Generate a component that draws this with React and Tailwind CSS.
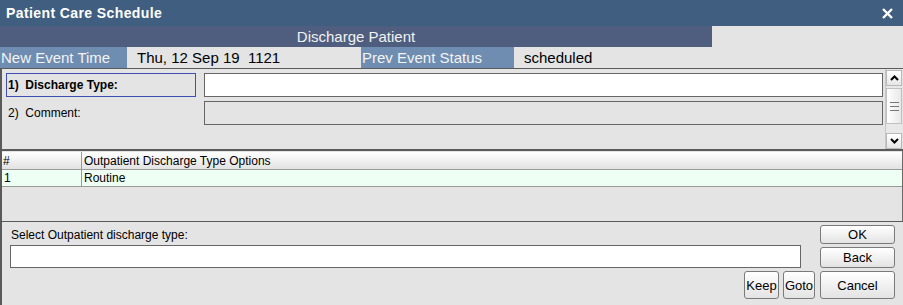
import React from 'react';

const Btn = ({ children, className }) => (
  <button
    className={`rounded-[3px] border border-[#7a7a7a] bg-gradient-to-b from-white to-[#e3e3e3] text-[13px] leading-none text-black ${className}`}
  >
    {children}
  </button>
);

const ScrollBar = () => (
  <div className="w-[17px] flex flex-col border-l border-[#c8c8c8] bg-[#e8e8e8]">
    <div className="h-[16px] mt-[1px] flex items-center justify-center border border-[#b8b8b8] bg-gradient-to-b from-white to-[#e6e6e6]">
      <svg width="9" height="6" viewBox="0 0 9 6">
        <path d="M1 5 L4.5 1.5 L8 5" stroke="#000" strokeWidth="2" fill="none" />
      </svg>
    </div>
    <div className="h-[36px] mt-[2px] flex items-center justify-center border border-[#c0c0c0] bg-gradient-to-r from-white to-[#e8e8e8]">
      <div className="flex flex-col gap-[3px]">
        <div className="w-[9px] h-px bg-[#777]" />
        <div className="w-[9px] h-px bg-[#777]" />
        <div className="w-[9px] h-px bg-[#777]" />
      </div>
    </div>
    <div className="flex-1" />
    <div className="h-[16px] flex items-center justify-center border border-[#b8b8b8] bg-gradient-to-b from-white to-[#e6e6e6]">
      <svg width="9" height="6" viewBox="0 0 9 6">
        <path d="M1 1 L4.5 4.5 L8 1" stroke="#000" strokeWidth="2" fill="none" />
      </svg>
    </div>
  </div>
);

export default function App() {
  return (
    <div
      className="w-[903px] h-[305px] bg-[#e4e4e4] flex flex-col overflow-hidden text-black"
      style={{ fontFamily: '"Liberation Sans", Arial, sans-serif' }}
    >
      {/* title bar */}
      <div className="h-[26px] bg-[#3f5e80] flex items-center justify-between pl-[6px] pr-[10px]">
        <span className="text-white font-bold text-[14px] tracking-[0.4px]">Patient Care Schedule</span>
        <svg width="11" height="11" viewBox="0 0 11 11">
          <path d="M1 1 L10 10 M10 1 L1 10" stroke="#fff" strokeWidth="2.4" />
        </svg>
      </div>

      {/* header */}
      <div className="h-[21px] flex">
        <div className="w-[712px] bg-[#4f5e7e] text-[#f2f2f2] text-[15px] leading-[21px] text-center">
          Discharge Patient
        </div>
      </div>

      {/* event info */}
      <div className="h-[21px] flex text-[15px] leading-[21px]">
        <div className="w-[127px] bg-[#6e8db1] text-[#f4f4f4] pl-[1px]">New Event Time</div>
        <div className="w-[234px] pl-[10px]">Thu, 12 Sep 19&nbsp;&nbsp;1121</div>
        <div className="w-[153px] bg-[#6e8db1] text-[#f4f4f4] pl-[1px]">Prev Event Status</div>
        <div className="pl-[10px]">scheduled</div>
      </div>

      {/* form */}
      <div className="h-[83px] flex border-t border-[#5a5a5a] border-l-2 border-b-2 border-l-[#5a5a5a] border-b-[#5a5a5a]">
        <div className="flex-1 flex flex-col gap-[4px] pt-[4px] pl-[4px] pr-[2px]">
          <div className="flex items-center gap-[8px]">
            <div className="w-[190px] h-[24px] border border-[#3d4fb4] flex items-center pl-[1px] text-[12px] font-bold">
              1)&nbsp;&nbsp;Discharge Type:
            </div>
            <div className="flex-1 h-[24px] bg-white border border-[#666]" />
          </div>
          <div className="flex items-center gap-[8px]">
            <div className="w-[190px] h-[24px] flex items-center pl-[2px] text-[12px]">
              2)&nbsp;&nbsp;Comment:
            </div>
            <div className="flex-1 h-[24px] border border-[#666]" />
          </div>
        </div>
        <ScrollBar />
        <div className="w-[1px]" />
      </div>

      {/* table */}
      <div className="h-[71px] flex flex-col border-l-2 border-[#5a5a5a] border-r border-r-[#6a6a6a] border-b border-b-[#5a5a5a] text-[12px]">
        <div className="h-[18px] mt-[1px] flex bg-gradient-to-b from-white to-[#e2e2e2] border-b border-[#9a9a9a]">
          <div className="w-[80px] pl-[1px] leading-[18px] border-r border-[#9a9a9a]">#</div>
          <div className="pl-[2px] leading-[18px]">Outpatient Discharge Type Options</div>
        </div>
        <div className="h-[17px] flex bg-[#eefff3] border-b border-[#9a9a9a]">
          <div className="w-[80px] pl-[2px] leading-[16px] border-r border-[#9a9a9a]">1</div>
          <div className="pl-[2px] leading-[16px]">Routine</div>
        </div>
      </div>

      {/* bottom */}
      <div className="flex-1 flex border-l-2 border-[#5a5a5a]">
        <div className="flex flex-col pl-[8px] pt-[6px]">
          <div className="text-[12px] leading-[14px] pl-[1px]">Select Outpatient discharge type:</div>
          <div className="w-[791px] h-[23px] mt-[3px] bg-white border border-[#666]" />
        </div>
        <div className="flex-1 flex flex-col items-end pr-[8px] pt-[3px]">
          <Btn className="w-[75px] h-[19px]">OK</Btn>
          <Btn className="w-[75px] h-[21px] mt-[3px]">Back</Btn>
          <div className="flex gap-[4px] mt-[3px]">
            <Btn className="w-[35px] h-[28px] -ml-[100px]">Keep</Btn>
            <Btn className="w-[32px] h-[28px]">Goto</Btn>
            <Btn className="w-[75px] h-[28px] ml-px">Cancel</Btn>
          </div>
        </div>
      </div>
    </div>
  );
}
